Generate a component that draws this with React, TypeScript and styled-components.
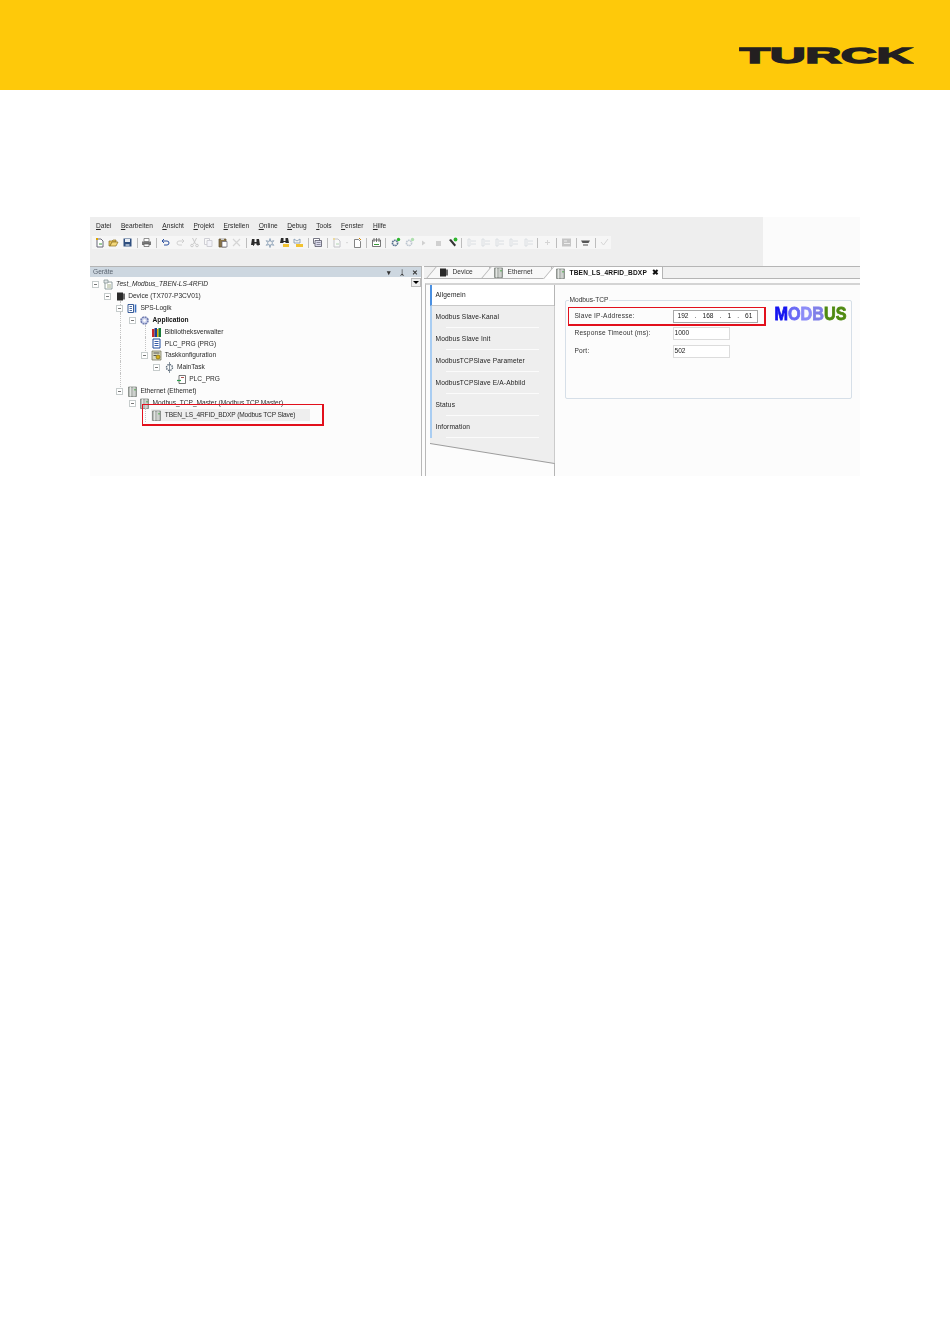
import React from 'react'
import styled, { createGlobalStyle } from 'styled-components'

const GlobalStyle = createGlobalStyle`
  html, body { margin: 0; padding: 0; background: #fff; }
  body { font-family: "Liberation Sans", Arial, sans-serif; }
`

const Page = styled.div`
  width: 950px;
  height: 1344px;
  overflow: hidden;
`

const Banner = styled.header`
  height: 90px;
  background: #fec90a;
  display: flex;
  align-items: flex-start;
  justify-content: flex-end;
  padding: 41px 36px 0 0;
  box-sizing: border-box;
`

const Figure = styled.div`
  width: 770px;
  height: 259px;
  margin: 127px 0 0 90px;
  background: #fcfcfc;
  color: #222;
  font-size: 6.6px;
  line-height: 1;
  white-space: nowrap;
  display: flex;
  flex-direction: column;
  filter: blur(0.3px);
`

const TopBar = styled.div`
  height: 49px;
  background: linear-gradient(to right, #eeeeee 673px, #fbfbfb 673px);
  flex: none;
`

const Menu = styled.nav`
  height: 19px;
  display: flex;
  align-items: center;
  padding-left: 6px;
  gap: 9.5px;
  span:first-letter { text-decoration: underline; }
`

const MenuItem = styled.span`
  display: inline-block;
  color: #2a2a2a;
`

const Toolbar = styled.div`
  width: 519px;
  margin-left: 2px;
  height: 13px;
  background: #f6f6f6;
  display: flex;
  align-items: center;
`

const ToolButton = styled.span<{ $dim?: boolean; $narrow?: boolean }>`
  width: ${p => (p.$narrow ? 6 : 14.2)}px;
  height: 12px;
  flex: none;
  display: flex;
  align-items: center;
  justify-content: center;
  opacity: ${p => (p.$dim ? 0.35 : 1)};
`

const ToolSep = styled.span`
  width: 1px;
  height: 10px;
  margin: 0 2px;
  background: #bdbdbd;
  flex: none;
`

const Panes = styled.div`
  flex: 1;
  display: flex;
  min-height: 0;
`

const LeftPane = styled.section`
  width: 332px;
  flex: none;
  border-right: 1px solid #b8b8b8;
  box-sizing: border-box;
  position: relative;
`

const PaneTitle = styled.div`
  height: 11px;
  background: #cdd7e0;
  border-top: 1px solid #b5b5b5;
  box-sizing: border-box;
  display: flex;
  align-items: center;
  padding-left: 3px;
  color: #5a6470;
`

const PaneTitleText = styled.span`
  flex: 1;
`

const PaneControl = styled.span`
  width: 13px;
  text-align: center;
  font-size: 7px;
  font-weight: bold;
  color: #333;
`

const DropButton = styled.span`
  position: absolute;
  right: 0;
  top: 12px;
  width: 10px;
  height: 9px;
  border: 1px solid #bbb;
  box-sizing: border-box;
  background: #eee;
  display: flex;
  align-items: center;
  justify-content: center;
  &::after {
    content: '';
    border: 3px solid transparent;
    border-top: 3px solid #000;
    border-bottom: 0;
  }
`

const Tree = styled.div`
  position: relative;
  padding-top: 1.5px;
`

const TreeRow = styled.div<{ $level: number }>`
  position: relative;
  height: 11.9px;
  display: flex;
  align-items: center;
  padding-left: ${p => 2 + p.$level * 12.2}px;
`

const SelectedBand = styled.span`
  position: absolute;
  left: 61px;
  width: 159px;
  top: 0;
  bottom: 0;
  background: #eeeeee;
`

const Guide = styled.span<{ $level: number }>`
  position: absolute;
  top: -1px;
  bottom: -1px;
  left: ${p => 6 + p.$level * 12.2}px;
  border-left: 1px dotted #c4c4c4;
`

const Expander = styled.span`
  position: relative;
  width: 7px;
  height: 7px;
  margin-right: 1px;
  flex: none;
  border: 1px solid #c6cccc;
  box-sizing: border-box;
  background: #fff;
  &::after {
    content: '';
    position: absolute;
    left: 1px;
    right: 1px;
    top: 2px;
    height: 1px;
    background: #777;
  }
`

const ExpanderGap = styled.span`
  width: 8px;
  flex: none;
`

const TreeIcon = styled.span`
  position: relative;
  width: 12px;
  height: 11px;
  margin: 0 2px 0 2px;
  flex: none;
  display: flex;
  align-items: center;
  justify-content: center;
`

const TreeLabel = styled.span<{ $bold?: boolean; $italic?: boolean; $tight?: boolean }>`
  position: relative;
  font-weight: ${p => (p.$bold ? 'bold' : 'normal')};
  font-style: ${p => (p.$italic ? 'italic' : 'normal')};
  letter-spacing: ${p => (p.$tight ? '-0.16px' : '0')};
  color: ${p => (p.$bold ? '#111' : '#2a2a2a')};
`

const TreeMark = styled.span`
  position: absolute;
  left: 52px;
  top: 127px;
  width: 182px;
  height: 22px;
  border: solid #e2101c;
  border-width: 1px 2px 2px 1px;
  box-sizing: border-box;
`

const RightPane = styled.section`
  flex: 1;
  margin-left: 2px;
  display: flex;
  flex-direction: column;
  min-width: 0;
`

const TabStrip = styled.div`
  height: 13px;
  flex: none;
  background: #f1f1f1;
  border-top: 1px solid #b5b5b5;
  border-bottom: 1px solid #b5b5b5;
  box-sizing: border-box;
  display: flex;
  padding-left: 11px;
`

const Tab = styled.div<{ $width: number; $active?: boolean }>`
  position: relative;
  width: ${p => p.$width}px;
  flex: none;
  display: flex;
  align-items: center;
  gap: 3.5px;
  padding-left: 3px;
  box-sizing: border-box;
  background: ${p => (p.$active ? '#ffffff' : '#f8f8f8')};
  border-right: 1px solid #b5b5b5;
  height: ${p => (p.$active ? '12px' : '11px')};
  font-weight: ${p => (p.$active ? 'bold' : 'normal')};
  letter-spacing: ${p => (p.$active ? '0.15px' : '0')};
  color: ${p => (p.$active ? '#111' : '#333')};
  &::before {
    content: '';
    position: absolute;
    left: -4px;
    top: 0;
    bottom: 0;
    width: 8px;
    border-left: 1px solid #b5b5b5;
    transform: skewX(-40deg);
    background: inherit;
    z-index: 0;
  }
  & > * { position: relative; z-index: 1; }
`

const TabClose = styled.span`
  position: absolute !important;
  right: 3px;
  font-size: 8px;
  font-weight: bold;
  color: #111;
`

const TabBody = styled.div`
  flex: 1;
  min-height: 0;
  display: flex;
  margin-top: 4px;
  margin-left: 1px;
  padding-left: 4px;
  border-top: 2px solid #d4d4d4;
  border-left: 1px solid #b8b8b8;
`

const SideColumn = styled.div`
  width: 124.5px;
  flex: none;
  border-right: 1px solid #b5b5b5;
  box-sizing: border-box;
  letter-spacing: 0.15px;
`

const ActiveSide = styled.div`
  height: 21px;
  display: flex;
  align-items: center;
  padding-left: 3.5px;
  background: #fff;
  border-left: 2px solid #4a90e2;
  border-bottom: 1px solid #c8c8c8;
  box-sizing: border-box;
`

const SideShadow = styled.div`
  filter: drop-shadow(0 1px 0 #9c9c9c);
`

const SideList = styled.div`
  height: 157px;
  background: #eeeeee;
  clip-path: polygon(0 0, 100% 0, 100% 100%, 0 137px);
  box-sizing: border-box;
  margin-right: -1px;
`

const SideItem = styled.div`
  position: relative;
  height: 22px;
  display: flex;
  align-items: center;
  padding-left: 3.5px;
  border-left: 2px solid #a9cdf2;
  box-sizing: border-box;
  &::after {
    content: '';
    position: absolute;
    left: 14px;
    right: 16px;
    bottom: 0;
    height: 1px;
    background: #fbfbfb;
  }
`

const Group = styled.div`
  position: relative;
  width: 287.5px;
  height: 99px;
  margin: 15px 0 0 10px;
  padding: 6px 0 0 2px;
  border: 1px solid #d6dfe8;
  border-radius: 2px;
  box-sizing: border-box;
  display: flex;
  align-items: flex-start;
`

const GroupLegend = styled.span`
  position: absolute;
  left: 3px;
  top: -4px;
  padding: 0 1px;
  background: #fcfcfc;
  color: #333;
`

const Form = styled.div`
  width: 198px;
  flex: none;
`

const FormRow = styled.div<{ $marked?: boolean; $height: number }>`
  height: ${p => p.$height}px;
  display: flex;
  align-items: center;
  box-sizing: border-box;
  padding-left: ${p => (p.$marked ? 6 : 7)}px;
  border: ${p => (p.$marked ? 'solid #e2101c' : 'none')};
  border-width: 1px 2px 2px 1px;
`

const FormLabel = styled.label`
  width: 98px;
  flex: none;
  color: #333;
  letter-spacing: 0.2px;
`

const Field = styled.span<{ $width: number; $dark?: boolean }>`
  width: ${p => p.$width}px;
  height: 13px;
  padding: 0 1px;
  box-sizing: border-box;
  display: flex;
  align-items: center;
  justify-content: ${p => (p.$dark ? 'space-around' : 'flex-start')};
  border: 1px solid ${p => (p.$dark ? '#a8a8a8' : '#dcdcdc')};
  background: #fff;
  color: #222;
`

const LogoSlot = styled.div`
  margin: -5px 0 0 8px;
  flex: none;
`

const TurckLogo = () => (
  <svg width="175" height="27" viewBox="0 0 175 27" role="img" aria-label="TURCK">
    <text
      transform="translate(0.8 21.6) scale(2.24 1)"
      fontFamily="'Liberation Sans', Arial, sans-serif"
      fontWeight="bold"
      fontSize="22"
      fill="#231f20"
      stroke="#231f20"
      strokeWidth="1.4"
    >
      TURCK
    </text>
  </svg>
)

const ModbusLogo = () => (
  <svg width="74" height="23" viewBox="0 0 74 23" role="img" aria-label="MODBUS">
    <text
      transform="translate(0.5 18.1) scale(0.9 1)"
      fontFamily="'Liberation Sans', Arial, sans-serif"
      fontWeight="bold"
      fontSize="18"
      strokeWidth="0.8"
    >
      <tspan fill="#1414f0" stroke="#1414f0">M</tspan>
      <tspan fill="#6a6af5" stroke="#6a6af5">O</tspan>
      <tspan fill="#8c8cf7" stroke="#8c8cf7">D</tspan>
      <tspan fill="#7f7fe8" stroke="#7f7fe8">B</tspan>
      <tspan fill="#4f8a12" stroke="#4f8a12">US</tspan>
    </text>
  </svg>
)

type Glyph =
  | 'new' | 'open' | 'save' | 'print' | 'undo' | 'redo' | 'cut' | 'copy' | 'paste' | 'del'
  | 'find' | 'next' | 'findY' | 'nextY' | 'docs' | 'arrow' | 'page' | 'build' | 'gear' | 'play'
  | 'stop' | 'wrench' | 'line' | 'dot' | 'grid' | 'cart' | 'check'
  | 'project' | 'device' | 'sps' | 'app' | 'lib' | 'prg' | 'task' | 'main' | 'pou' | 'net'

const glyphs: Record<Glyph, React.ReactNode> = {
  new: <><path d="M3 2h4l2 2v6H3z" fill="#fff" stroke="#667" /><path d="M2 1l2 2M4 1L2 3" stroke="#d9a400" /><path d="M5 7h3" stroke="#3a9a3a" /></>,
  open: <><path d="M1 4h3l1-1h3v2H4L2 9H1z" fill="#e8c35a" stroke="#8a6d1d" strokeWidth=".7" /><path d="M2 9l2-4h6L8 9z" fill="#f4d97c" stroke="#8a6d1d" strokeWidth=".7" /></>,
  save: <><path d="M1.5 1.5h8v8h-8z" fill="#2f4f7f" /><path d="M3 2h5v3H3z" fill="#e8edf3" /><path d="M3.5 7h4v2.5h-4z" fill="#9fb1c8" /></>,
  print: <><path d="M3 1.5h5v3H3z" fill="#fff" stroke="#666" strokeWidth=".7" /><path d="M1 4.5h9v3.5H1z" fill="#777" /><path d="M3 7h5v2.5H3z" fill="#fff" stroke="#555" strokeWidth=".7" /></>,
  undo: <path d="M2 4h5a2 2 0 0 1 0 4H4M2 4l2-2M2 4l2 2" fill="none" stroke="#2b4f9e" />,
  redo: <path d="M9 4H4a2 2 0 0 0 0 4h3M9 4L7 2M9 4L7 6" fill="none" stroke="#8c8c8c" />,
  cut: <><path d="M3.5 1l3 6M7.5 1l-3 6" stroke="#777" fill="none" /><circle cx="3" cy="8.5" r="1.3" fill="none" stroke="#777" /><circle cx="8" cy="8.5" r="1.3" fill="none" stroke="#777" /></>,
  copy: <><path d="M1.5 1.5h5v6h-5z" fill="#fff" stroke="#889" /><path d="M4 3.5h5v6H4z" fill="#eef" stroke="#889" /></>,
  paste: <><path d="M2 2h7v8H2z" fill="#8a7448" stroke="#5c4d2f" strokeWidth=".7" /><path d="M4 1h3v2H4z" fill="#ccc" /><path d="M5 4.5h5V10H5z" fill="#fff" stroke="#667" strokeWidth=".7" /></>,
  del: <path d="M2 2l7 7M9 2l-7 7" stroke="#9a9a9a" strokeWidth="1.2" />,
  find: <><path d="M2 2h2.5v3h2V2H9l1 6H6.5V6.5h-2V8H1z" fill="#2b2b2b" /><path d="M3 8.5h1M7.5 8.5h1" stroke="#666" /></>,
  next: <><path d="M5 1.5l.8 3 3-.8-2 2.3 2 2.3-3-.8-.8 3-.8-3-3 .8 2-2.3-2-2.3 3 .8z" fill="none" stroke="#7d95ad" strokeWidth=".8" /></>,
  findY: <><path d="M2 1h2.5v3h2V1H9l1 5H6.5V5h-2v1H1z" fill="#2b2b2b" /><path d="M4 7h6v3H4z" fill="#f2c230" /></>,
  nextY: <><path d="M1 2l3 2 3-2v4H1z" fill="none" stroke="#7d95ad" strokeWidth=".8" /><path d="M3 7h7v3H3z" fill="#f2c230" /></>,
  docs: <><path d="M1.5 1.5h6v5h-6z" fill="#fff" stroke="#556" strokeWidth=".8" /><path d="M3 3.5h6.500v6H3z" fill="#dde" stroke="#556" strokeWidth=".8" /><path d="M4.500 5.500h4M4.500 7.500h4" stroke="#667" strokeWidth=".7" /></>,
  arrow: <path d="M3.500 5h4L5.500 7.500z" fill="#777" />,
  page: <><path d="M2.500 2.500h4l2 2v6h-6z" fill="#fff" stroke="#666" strokeWidth=".8" /><path d="M7 1l2 2" stroke="#d98a00" /></>,
  build: <><path d="M1.500 3h8v6.500h-8z" fill="#fff" stroke="#555" strokeWidth=".8" /><path d="M3 1v4M5.500 1v4M8 1v4" stroke="#555" strokeWidth=".8" /><path d="M3 7.500h5" stroke="#3a9a3a" /></>,
  gear: <><circle cx="5" cy="6" r="2.600" fill="none" stroke="#56708c" strokeWidth="1.600" strokeDasharray="1.600 .6" /><circle cx="8.500" cy="2.500" r="1.700" fill="#2fb52f" /></>,
  play: <path d="M4 3.500l3.500 2.500L4 8.500z" fill="#8a8a8a" />,
  stop: <path d="M3 4h5v5H3z" fill="#8a8a8a" />,
  wrench: <><path d="M2 3l2-1 5 6-1.500 1.500z" fill="#333" /><circle cx="8.500" cy="2.500" r="1.900" fill="#2fb52f" /></>,
  line: <><path d="M2 2h2v7H2zM5 4h5M5 7h5" fill="none" stroke="#9aa7b3" strokeWidth=".8" /></>,
  dot: <path d="M3 5.500h5M5.500 3v5" stroke="#9a9a9a" />,
  grid: <><path d="M1 1.500h9v8H1z" fill="#6d6d6d" /><path d="M3 3.500h3v1H3zM3 6h6v1H3z" fill="#ddd" /></>,
  cart: <><path d="M1 3.500h9L8.500 6h-6z" fill="#555" /><path d="M3 8h5" stroke="#555" /></>,
  check: <path d="M2 5l2.500 3L9 2" fill="none" stroke="#999" />,
  project: <><path d="M2 3h7v7H2z" fill="#fff" stroke="#7a8a8a" strokeWidth=".8" /><path d="M1 1h4v3H1z" fill="#e3e7ea" stroke="#7a8a8a" strokeWidth=".7" /><path d="M4 6h4M4 8h4" stroke="#8a9a70" strokeWidth=".8" /></>,
  device: <><path d="M2 1.500h6v8H2z" fill="#2a2a2a" /><path d="M8 2.500h2v6H8z" fill="#6a6a6a" /></>,
  sps: <><path d="M1 1.500h5.500v8H1z" fill="#fff" stroke="#234a8c" strokeWidth=".9" /><path d="M2.500 3.500h2.500M2.500 5.500h2.500M2.500 7.500h2.500" stroke="#234a8c" strokeWidth=".8" /><path d="M8.500 1.500v8" stroke="#3a6fc0" strokeWidth="1.600" /></>,
  app: <><circle cx="5.500" cy="5.500" r="3.500" fill="#c9cfea" stroke="#6f7cb0" strokeWidth="1.600" strokeDasharray="2 .7" /><circle cx="5.500" cy="5.500" r="1.300" fill="#fff" /></>,
  lib: <><path d="M1 2h2.500v8H1z" fill="#c92a2a" /><path d="M3.500 1h2.500v9H3.500z" fill="#1f3f8f" /><path d="M6 2h1.500v8H6z" fill="#e2b100" /><path d="M7.500 1H10v9H7.500z" fill="#1a7a3a" /></>,
  prg: <><path d="M2 1h7v9H2z" fill="#fff" stroke="#1f4a9c" /><path d="M3.500 3.500h4M3.500 5.500h4M3.500 7.500h4" stroke="#1f4a9c" strokeWidth=".9" /></>,
  task: <><path d="M1 1h9v9H1z" fill="#d9d9c0" stroke="#6a6a50" strokeWidth=".7" /><path d="M2.500 3h6M2.500 5.500h3" stroke="#444" strokeWidth=".9" /><circle cx="7" cy="7" r="2" fill="#d7b21c" stroke="#705c00" strokeWidth=".6" /></>,
  main: <><circle cx="5.500" cy="5.500" r="3" fill="none" stroke="#5a6a7a" strokeWidth="1.400" strokeDasharray="1.500 .8" /><path d="M5.500 0v11" stroke="#5a6a7a" strokeWidth=".7" /></>,
  pou: <><path d="M3 1.500h6.500v8H3z" fill="#fff" stroke="#555" strokeWidth=".8" /><path d="M1 6.500h4" stroke="#2a9a4a" strokeWidth="1.200" /><path d="M5 3.500h3" stroke="#b05050" /></>,
  net: <><path d="M1.500 1h8v9.500h-8z" fill="#b9bdb9" stroke="#6f7570" strokeWidth=".7" /><path d="M3.500 1v9.500M7 1v9.500" stroke="#eef0ee" strokeWidth=".8" /><path d="M7.500 3h1v1.500h-1z" fill="#2fa32f" /></>,
}

const Icon = ({ name }: { name: Glyph }) => (
  <svg width="11" height="11" viewBox="0 0 11 11">
    {glyphs[name]}
  </svg>
)

const menuItems = ['Datei', 'Bearbeiten', 'Ansicht', 'Projekt', 'Erstellen', 'Online', 'Debug', 'Tools', 'Fenster', 'Hilfe']

// '|' is a separator, a leading '~' a greyed-out button
const tools = [
  'new', 'open', 'save', '|', 'print', '|', 'undo', '~redo', '~cut', '~copy', 'paste', '~del', '|',
  'find', 'next', 'findY', 'nextY', '|', 'docs', '|', '~new', '~arrow', 'page', '|', 'build', '|',
  'gear', '~gear', '~play', '~stop', 'wrench', '|', '~line', '~line', '~line', '~line', '~line', '|',
  '~dot', '|', '~grid', '|', 'cart', '|', '~check',
]

type Row = {
  level: number
  icon: Glyph
  label: string
  open?: boolean
  bold?: boolean
  italic?: boolean
  selected?: boolean
  guides?: number[]
}

const rows: Row[] = [
  { level: 0, icon: 'project', label: 'Test_Modbus_TBEN-LS-4RFID', open: true, italic: true },
  { level: 1, icon: 'device', label: 'Device (TX707-P3CV01)', open: true },
  { level: 2, icon: 'sps', label: 'SPS-Logik', open: true, guides: [2] },
  { level: 3, icon: 'app', label: 'Application', open: true, bold: true, guides: [2] },
  { level: 4, icon: 'lib', label: 'Bibliotheksverwalter', guides: [2, 4] },
  { level: 4, icon: 'prg', label: 'PLC_PRG (PRG)', guides: [2, 4] },
  { level: 4, icon: 'task', label: 'Taskkonfiguration', open: true, guides: [2] },
  { level: 5, icon: 'main', label: 'MainTask', open: true, guides: [2] },
  { level: 6, icon: 'pou', label: 'PLC_PRG', guides: [2] },
  { level: 2, icon: 'net', label: 'Ethernet (Ethernet)', open: true },
  { level: 3, icon: 'net', label: 'Modbus_TCP_Master (Modbus TCP Master)', open: true },
  { level: 4, icon: 'net', label: 'TBEN_LS_4RFID_BDXP (Modbus TCP Slave)', selected: true, guides: [4] },
]

const sideItems = ['Modbus Slave-Kanal', 'Modbus Slave Init', 'ModbusTCPSlave Parameter', 'ModbusTCPSlave E/A-Abbild', 'Status', 'Information']

const App = () => (
  <Page>
    <GlobalStyle />
    <Banner>
      <TurckLogo />
    </Banner>
    <Figure>
      <TopBar>
        <Menu>
          {menuItems.map(item => (
            <MenuItem key={item}>{item}</MenuItem>
          ))}
        </Menu>
        <Toolbar>
          {tools.map((tool, i) =>
            tool === '|' ? (
              <ToolSep key={i} />
            ) : (
              <ToolButton key={i} $dim={tool.startsWith('~')} $narrow={tool === '~arrow'}>
                <Icon name={tool.replace('~', '') as Glyph} />
              </ToolButton>
            ),
          )}
        </Toolbar>
      </TopBar>
      <Panes>
        <LeftPane>
          <PaneTitle>
            <PaneTitleText>Geräte</PaneTitleText>
            <PaneControl>▾</PaneControl>
            <PaneControl>ᛣ</PaneControl>
            <PaneControl>✕</PaneControl>
          </PaneTitle>
          <DropButton />
          <Tree>
            {rows.map(row => (
              <TreeRow key={row.label} $level={row.level}>
                {row.selected && <SelectedBand />}
                {row.guides?.map(g => <Guide key={g} $level={g} />)}
                {row.open ? <Expander /> : <ExpanderGap />}
                <TreeIcon>
                  <Icon name={row.icon} />
                </TreeIcon>
                <TreeLabel $bold={row.bold} $italic={row.italic} $tight={row.selected}>
                  {row.label}
                </TreeLabel>
              </TreeRow>
            ))}
            <TreeMark />
          </Tree>
        </LeftPane>
        <RightPane>
          <TabStrip>
            <Tab $width={55}>
              <Icon name="device" />
              <span>Device</span>
            </Tab>
            <Tab $width={62}>
              <Icon name="net" />
              <span>Ethernet</span>
            </Tab>
            <Tab $width={111} $active>
              <Icon name="net" />
              <span>TBEN_LS_4RFID_BDXP</span>
              <TabClose>✖</TabClose>
            </Tab>
          </TabStrip>
          <TabBody>
            <SideColumn>
              <ActiveSide>Allgemein</ActiveSide>
              <SideShadow>
                <SideList>
                  {sideItems.map(item => (
                    <SideItem key={item}>{item}</SideItem>
                  ))}
                </SideList>
              </SideShadow>
            </SideColumn>
            <Group>
              <GroupLegend>Modbus-TCP</GroupLegend>
              <Form>
                <FormRow $marked $height={19}>
                  <FormLabel>Slave IP-Addresse:</FormLabel>
                  <Field $width={85} $dark>
                    <span>192</span>
                    <span>.</span>
                    <span>168</span>
                    <span>.</span>
                    <span>1</span>
                    <span>.</span>
                    <span>61</span>
                  </Field>
                </FormRow>
                <FormRow $height={14}>
                  <FormLabel>Response Timeout (ms):</FormLabel>
                  <Field $width={57}>1000</Field>
                </FormRow>
                <FormRow $height={23}>
                  <FormLabel>Port:</FormLabel>
                  <Field $width={57}>502</Field>
                </FormRow>
              </Form>
              <LogoSlot>
                <ModbusLogo />
              </LogoSlot>
            </Group>
          </TabBody>
        </RightPane>
      </Panes>
    </Figure>
  </Page>
)

export default App
